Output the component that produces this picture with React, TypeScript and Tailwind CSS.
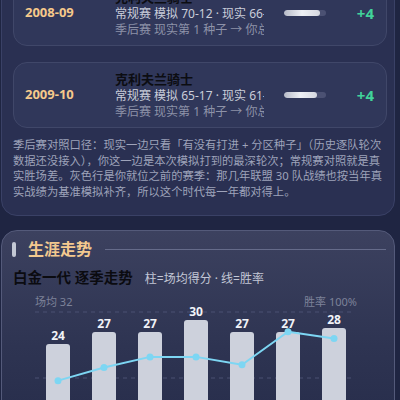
import React from "react";

const seasons = [
  {
    year: "2008-09",
    team: "克利夫兰骑士",
    reg: "常规赛 模拟 70-12 · 现实 66-16",
    post: "季后赛 现实第 1 种子 → 你总冠军",
    fill: 36,
    diff: "+4",
  },
  {
    year: "2009-10",
    team: "克利夫兰骑士",
    reg: "常规赛 模拟 65-17 · 现实 61-21",
    post: "季后赛 现实第 1 种子 → 你总决赛",
    fill: 33,
    diff: "+4",
  },
];

// 场均得分 + 胜率
const trend = [
  { ppg: 24, win: 48 },
  { ppg: 27, win: 58 },
  { ppg: 27, win: 66 },
  { ppg: 30, win: 66 },
  { ppg: 27, win: 60 },
  { ppg: 27, win: 85 },
  { ppg: 28, win: 80 },
];

function SeasonCard({ s }: { s: (typeof seasons)[number] }) {
  return (
    <div className="flex h-[66px] items-center rounded-[14px] border border-[#404769] bg-[#30375a] pl-[11px] pr-[12px]">
      <div className="w-[90px] text-[13px] font-bold text-[#f6c98b]">{s.year}</div>
      <div className="w-[149px] overflow-hidden whitespace-nowrap">
        <div className="text-[13px] font-bold leading-[18px] text-[#0c0d12]">{s.team}</div>
        <div className="text-[12px] leading-[16px] text-[#c9cdd9]">{s.reg}</div>
        <div className="text-[12px] leading-[16px] text-[#8d92a8]">{s.post}</div>
      </div>
      <div className="ml-[20px] h-[6px] w-[42px] overflow-hidden rounded-full bg-[#4b5173]">
        <div
          className="h-full rounded-full bg-gradient-to-r from-[#b7bbc8] via-[#eef0f5] to-[#d5d8e0]"
          style={{ width: s.fill }}
        />
      </div>
      <div className="flex-1 text-right text-[15px] font-bold text-[#41d39a]">{s.diff}</div>
    </div>
  );
}

function TrendChart() {
  // y 0 in the svg == page y 292, x 0 == page x 2
  const top = 20;
  const barY = (v: number) => top + (32 - v) * 4;
  const winY = (p: number) => top + (100 - p) * 1.32;
  const cx = (i: number) => 56 + i * 46;
  const pts = trend.map((t, i) => `${cx(i)},${winY(t.win)}`).join(" ");

  return (
    <svg width="392" height="150" className="mt-[5px] block">
      <text x="33" y="14" fontSize="11" fill="#7d8299">场均 32</text>
      <text x="355" y="14" fontSize="11" fill="#7d8299" textAnchor="end">胜率 100%</text>
      <line x1="33" x2="353" y1={top} y2={top} stroke="#4a5072" strokeDasharray="4 4" />
      <line x1="33" x2="353" y1={top + 66} y2={top + 66} stroke="#4a5072" strokeDasharray="4 4" />
      {trend.map((t, i) => (
        <g key={i}>
          <rect x={cx(i) - 12} y={barY(t.ppg)} width="24" height="200" rx="3" fill="#cdd1dc" />
          <text
            x={cx(i)}
            y={barY(t.ppg) - 4}
            fontSize="12"
            fontWeight="700"
            fill="#f1f3f8"
            textAnchor="middle"
          >
            {t.ppg}
          </text>
        </g>
      ))}
      <polyline points={pts} fill="none" stroke="#7dd6f3" strokeWidth="2" strokeLinejoin="round" />
      {trend.map((t, i) => (
        <circle key={i} cx={cx(i)} cy={winY(t.win)} r="3.5" fill="#7dd6f3" />
      ))}
    </svg>
  );
}

export default function App() {
  return (
    <div className="h-[400px] overflow-hidden bg-[#1f2542] font-['Noto_Sans','Noto_Sans_CJK_SC',sans-serif]">
      <div className="-mt-[33px] ml-[1px] w-[394px]">
        {/* 赛季对照 */}
        <section className="rounded-2xl border border-[#3a4166] bg-[#2a3052] pb-[16px] pl-[11px] pr-[7px] pt-[12px]">
          <div className="flex flex-col gap-[16px]">
            {seasons.map((s) => (
              <SeasonCard key={s.year} s={s} />
            ))}
          </div>
          <p className="mt-[9px] text-[11.3px] leading-[15.5px] text-[#9ea3ba]">
            季后赛对照口径：现实一边只看「有没有打进 + 分区种子」（历史逐队轮次数据还没接入），你这一边是本次模拟打到的最深轮次；常规赛对照就是真实胜场差。灰色行是你就位之前的赛季：那几年联盟 30 队战绩也按当年真实战绩为基准模拟补齐，所以这个时代每一年都对得上。
          </p>
        </section>

        {/* 生涯走势 */}
        <section className="mt-[14px] rounded-t-2xl border border-[#545a7a] bg-gradient-to-b from-[#3c415f] via-[#2e3452] to-[#242a48] pb-[20px]">
          <div className="mt-[8px] flex h-[20px] items-center pl-[10px] pr-[8px]">
            <div className="h-[15px] w-[4px] rounded-full bg-[#c3c8d4]" />
            <div className="ml-[12px] text-[16px] font-bold text-[#f3c98f]">生涯走势</div>
            <div className="ml-[13px] h-px flex-1 bg-[#656b8a]" />
          </div>
          <div className="mt-[8px] flex h-[20px] items-baseline px-[11px]">
            <span className="text-[14.5px] font-bold text-[#0b0b10]">白金一代 逐季走势</span>
            <span className="ml-[12px] text-[12px] text-[#c3c7d6]">柱=场均得分 · 线=胜率</span>
          </div>
          <TrendChart />
        </section>
      </div>
    </div>
  );
}
